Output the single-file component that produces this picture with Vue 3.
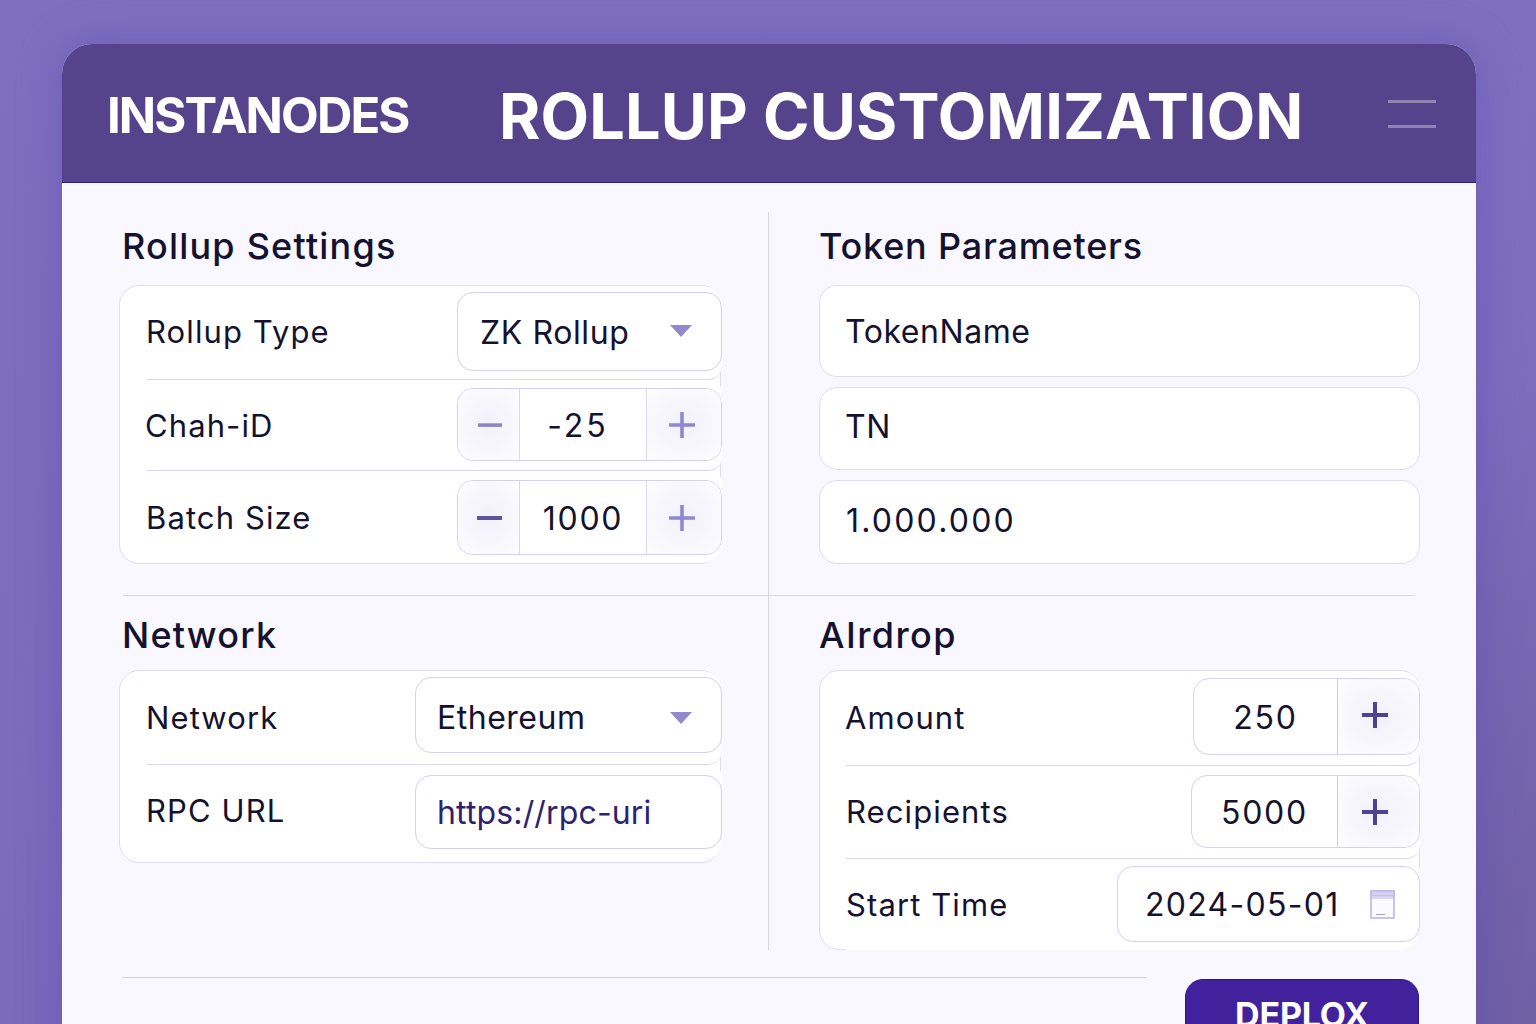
<script setup>
const rollupRows = [
  { label: 'Rollup Type', cls: 'r1' },
  { label: 'Chah-iD', cls: 'r2', value: '-25', minus: 'light' },
  { label: 'Batch Size', cls: 'r3', value: '1000', minus: 'dark' }
]
const tokens = [
  { text: 'TokenName', cls: 't1' },
  { text: 'TN', cls: 't2' },
  { text: '1.000.000', cls: 't3' }
]
</script>

<template>
  <div class="page">
    <div class="card">
      <header class="head">
        <div class="brand">INSTANODES</div>
        <h1 class="title">ROLLUP CUSTOMIZATION</h1>
        <div class="burger"><span></span><span></span></div>
      </header>

      <main class="grid">
        <section class="cell left top">
          <h2>Rollup Settings</h2>
          <div class="panel rollup">
            <div v-for="row in rollupRows" :key="row.label" class="row" :class="row.cls">
              <span class="label">{{ row.label }}</span>
              <div v-if="!row.value" class="ctl select">
                <span class="zk">ZK Rollup</span>
                <svg class="caret" viewBox="0 0 22 12"><path d="M0 0h22L11 12z" /></svg>
              </div>
              <div v-else class="ctl stepper">
                <div class="btn minusbtn">
                  <svg class="sign" :class="row.minus" viewBox="0 0 26 26">
                    <rect v-if="row.minus === 'light'" x="1" y="11.300" width="24" height="3.600" />
                    <rect v-else x="0" y="11" width="25" height="4" />
                  </svg>
                </div>
                <div class="val" :class="row.minus">{{ row.value }}</div>
                <div class="btn plusbtn">
                  <svg class="sign plus" viewBox="0 0 26 26"><path d="M11.200 0h3.600v11.200H26v3.600H14.800V26h-3.600V14.800H0v-3.600h11.200z" /></svg>
                </div>
              </div>
            </div>
          </div>
        </section>

        <section class="cell right top">
          <h2 class="tight">Token Parameters</h2>
          <div class="tokens">
            <div v-for="t in tokens" :key="t.text" class="token" :class="t.cls"><span>{{ t.text }}</span></div>
          </div>
        </section>

        <section class="cell left bottom">
          <h2>Network</h2>
          <div class="panel net">
            <div class="row n1">
              <span class="label">Network</span>
              <div class="ctl select wide">
                <span class="eth">Ethereum</span>
                <svg class="caret low" viewBox="0 0 22 12"><path d="M0 0h22L11 12z" /></svg>
              </div>
            </div>
            <div class="row n2">
              <span class="label">RPC URL</span>
              <div class="ctl select wide url"><span>https://rpc-uri</span></div>
            </div>
          </div>
        </section>

        <section class="cell right bottom">
          <h2 class="loose">AIrdrop</h2>
          <div class="panel air">
            <div class="row a1">
              <span class="label">Amount</span>
              <div class="ctl stepper amt">
                <div class="val">250</div>
                <div class="btn addbtn">
                  <svg class="sign add raised" viewBox="0 0 26 26"><path d="M11 0h4v11h11v4H15v11h-4V15H0v-4h11z" /></svg>
                </div>
              </div>
            </div>
            <div class="row a2">
              <span class="label">Recipients</span>
              <div class="ctl stepper rec">
                <div class="val">5000</div>
                <div class="btn addbtn">
                  <svg class="sign add" viewBox="0 0 26 26"><path d="M11 0h4v11h11v4H15v11h-4V15H0v-4h11z" /></svg>
                </div>
              </div>
            </div>
            <div class="row a3">
              <span class="label">Start Time</span>
              <div class="ctl date">
                <span>2024-05-01</span>
                <svg class="cal" viewBox="0 0 25 29" fill="none">
                  <rect x="1" y="1" width="23" height="27" fill="#fbfaff" stroke="#bdb5e6" stroke-width="1.6" />
                  <rect x="1" y="1" width="23" height="5" fill="#d6d1f0" stroke="#bdb5e6" stroke-width="1.2" />
                  <path d="M1 8h23" stroke="#bdb5e6" />
                  <path d="M6 24.500h9" stroke="#a9a0dc" stroke-width="1.2" />
                </svg>
              </div>
            </div>
          </div>
        </section>
      </main>

      <footer class="foot">
        <div class="rule"></div>
        <button class="deploy">DEPLOX</button>
      </footer>
    </div>
  </div>
</template>

<style>
body { margin: 0; background: #7c6dbb; }
</style>

<style scoped>
.page {
  height: 1024px;
  overflow: hidden;
  box-sizing: border-box;
  padding: 44px 60px 0 62px;
  background:
    radial-gradient(ellipse at 100% 100%, #7060a4 0%, rgba(112, 96, 164, 0) 45%),
    linear-gradient(180deg, #7f70bf 0%, #7a6bbb 100%);
  font-family: Inter, "Noto Sans", sans-serif;
  color: #14122e;
}
.card {
  width: 1414px;
  height: 1100px;
  border-radius: 30px 30px 0 0;
  background: #f9f7ff;
  overflow: hidden;
  box-shadow: 0 0 44px rgba(82, 66, 176, 0.42);
}
.head {
  height: 138px;
  background: #55448c;
  border-bottom: 1px solid #2b1a80;
  display: flex;
  align-items: center;
  padding: 0 40px 0 45px;
  color: #fff;
}
.brand {
  width: 392px;
  font-size: 49px;
  font-weight: 700;
  letter-spacing: -1.9px;
  line-height: 1;
  margin-top: 4px;
}
.title {
  margin: 7px 0 0;
  flex: 1;
  font-size: 63px;
  font-weight: 700;
  letter-spacing: 0.15px;
  line-height: 1;
  white-space: nowrap;
}
.burger {
  width: 48px;
  height: 28px;
  display: flex;
  flex-direction: column;
  justify-content: space-between;
  margin-top: 1px;
}
.burger span {
  display: block;
  height: 3px;
  background: #8e83b2;
}
.grid {
  margin: 29px 0 0 61px;
  width: 1292px;
  display: grid;
  grid-template-columns: 646px 646px;
  grid-template-rows: 384px 354px;
}
.cell { box-sizing: border-box; }
.left { border-right: 1px solid #d9d4ee; }
.right { padding-left: 51px; }
.top { padding-top: 11px; border-bottom: 1px solid #d9d4ee; }
.bottom { padding-top: 16px; }
h2 {
  margin: 0 0 16px -1px;
  font-size: 36px;
  font-weight: 500;
  line-height: 46px;
  letter-spacing: 1.2px;
  white-space: nowrap;
}
h2.tight { letter-spacing: 0.8px; }
h2.loose { letter-spacing: 1.4px; }
.bottom h2 { margin-bottom: 12px; }
.panel {
  box-sizing: border-box;
  background: #fff;
  border: 1px solid #dfdaf6;
  border-radius: 20px;
  margin-left: -4px;
  width: 602px;
}
.bottom.left .panel { margin-top: 1px; height: 193px; }
.rollup { height: 279px; }
.air { margin-left: -1px; width: 601px; height: 280px; }
.row {
  box-sizing: border-box;
  display: flex;
  align-items: flex-start;
  justify-content: space-between;
  margin-left: 27px;
  margin-right: -2px;
  background: #fff;
  border-bottom: 1px solid #d9d4f2;
  border-radius: 0 12px 14px 0;
}
.row:first-child { border-top-right-radius: 20px; }
.row:last-child { border-bottom: 0; border-bottom-right-radius: 20px; }
.label {
  font-size: 31px;
  line-height: 40px;
  letter-spacing: 1.1px;
  white-space: nowrap;
  margin-left: -1px;
}
.ctl {
  box-sizing: border-box;
  display: flex;
  align-items: center;
  background: #fff;
  border: 1px solid #d5cff4;
  border-radius: 16px;
  font-size: 32px;
  overflow: hidden;
}
.r1 { height: 94px; padding-top: 6px; }
.r1 .label { margin-top: 20px; }
.r1 .ctl { height: 79px; }
.r2 { height: 91px; padding-top: 8px; }
.r2 .label { margin-top: 18px; margin-left: -2px; }
.r2 .ctl { height: 73px; }
.r3 { height: 92px; padding-top: 9px; }
.r3 .label { margin-top: 18px; }
.r3 .ctl { height: 75px; }
.select {
  width: 265px;
  padding: 0 29px 0 22px;
  justify-content: space-between;
}
.select.wide { width: 307px; padding-left: 21px; }
.zk { letter-spacing: 0.6px; padding-top: 1px; }
.eth { letter-spacing: 0.5px; padding-top: 4px; }
.url { color: #2e2270; letter-spacing: 0.15px; }
.caret { width: 22px; height: 12px; fill: #9489cb; margin-top: -2px; }
.caret.low { margin-top: 6px; }
.stepper { width: 265px; }
.btn {
  height: 100%;
  display: flex;
  align-items: center;
  justify-content: center;
  box-sizing: border-box;
  background: radial-gradient(ellipse at center, #f2f0fa 0%, #faf9fe 70%, #fdfcff 100%);
}
.minusbtn { width: 62px; border-right: 1px solid #dcd8f1; padding-left: 3px; }
.plusbtn { width: 75px; border-left: 1px solid #dcd8f1; padding-right: 4px; }
.val { flex: 1; text-align: center; padding-top: 1px; letter-spacing: 1.7px; }
.val.light { padding-right: 10px; letter-spacing: 3px; }
.sign { width: 26px; height: 26px; fill: #8f85ca; }
.sign.light { fill: #8f85c6; }
.sign.dark { fill: #5f5299; }
.plus { fill: #8f87d0; }
.tokens {
  width: 601px;
  margin-left: -1px;
  display: flex;
  flex-direction: column;
}
.token {
  box-sizing: border-box;
  display: flex;
  align-items: center;
  padding-left: 25px;
  background: #fff;
  border: 1px solid #dfdaf6;
  border-radius: 18px;
  font-size: 32px;
  letter-spacing: 0.55px;
}
.t1 { height: 92px; margin-bottom: 10px; }
.t2 { height: 83px; margin-bottom: 10px; padding-bottom: 4px; }
.t3 { height: 84px; padding: 0 0 4px 26px; letter-spacing: 2.2px; }
.n1 { height: 94px; padding-top: 6px; }
.n1 .label { margin-top: 21px; }
.n1 .ctl { height: 76px; }
.n2 { height: 96px; padding-top: 10px; }
.n2 .label { margin-top: 16px; }
.n2 .ctl { height: 74px; }
.a1, .a2, .a3 { margin-left: 26px; margin-right: -1px; }
.a1 { height: 95px; padding-top: 7px; }
.a1 .label { margin-top: 20px; margin-left: -1px; }
.a1 .ctl { height: 77px; }
.a2 { height: 93px; padding-top: 9px; }
.a2 .label { margin-top: 17px; margin-left: 0; }
.a2 .ctl { height: 73px; }
.a3 { height: 91px; padding-top: 7px; }
.a3 .label { margin-top: 19px; margin-left: 0; }
.a3 .ctl { height: 76px; }
.amt { width: 227px; }
.rec { width: 229px; }
.addbtn {
  width: 82px;
  border-left: 1px solid #cfc9ea;
  padding-right: 8px;
}
.add { fill: #4f4391; }
.raised { margin-top: -4px; }
.date {
  width: 303px;
  justify-content: space-between;
  padding: 0 24px 0 27px;
  letter-spacing: 1.3px;
}
.cal { width: 25px; height: 29px; }
.foot {
  display: flex;
  align-items: flex-start;
  margin-left: 60px;
}
.rule {
  width: 1025px;
  height: 1px;
  margin-top: 27px;
  background: #d4cfe6;
}
.deploy {
  width: 234px;
  height: 90px;
  margin: 29px 0 0 38px;
  padding: 15px 0 35px;
  border: 1px solid #2f1688;
  border-radius: 18px;
  background: #41229c;
  color: #fff;
  font-family: Inter, "Noto Sans", sans-serif;
  font-size: 34px;
  font-weight: 700;
  letter-spacing: -0.2px;
  line-height: 40px;
  text-align: center;
  display: block;
}
</style>
